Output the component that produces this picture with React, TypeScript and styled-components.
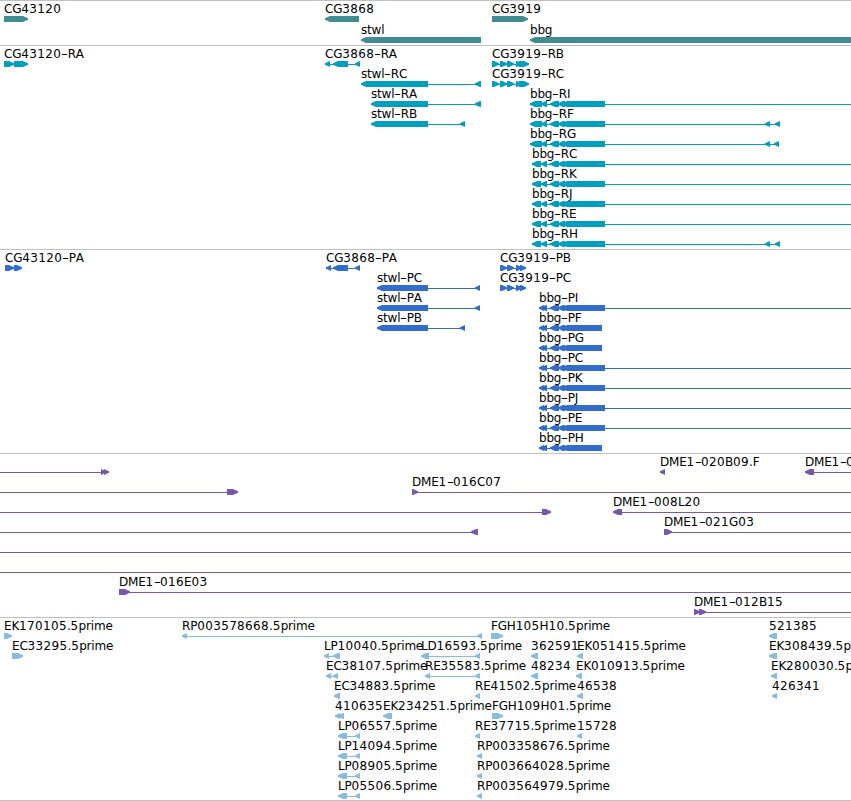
import * as React from "react"
import styled, { createGlobalStyle } from 'styled-components';

type Block = [number, number];

interface FeatureData {
    name?: string;
    reverse?: boolean;
    blocks: Block[];
    // ends of the connecting line, when it runs further than the blocks
    from?: number;
    to?: number;
}

interface TrackData {
    id: string;
    color: string;
    rowHeight: number;
    rows: FeatureData[][];
}

const VIEW_WIDTH = 851;
const BAR_HEIGHT = 6;
const HEAD = 5;

const GlobalStyle = createGlobalStyle`
    body {
        margin: 0;
        background: #ffffff;
    }
`;

const Browser = styled.main`
    width: ${VIEW_WIDTH}px;
    height: 801px;
    box-sizing: border-box;
    overflow: hidden;
    font-family: "DejaVu Sans", sans-serif;
    font-size: 12px;
    color: #000000;
`;

const TrackSection = styled.section`
    border-top: 1px solid #c0c0c0;
    padding: 1px 0 2px;
    &:first-of-type {
        padding-bottom: 1px;
    }
    &:last-of-type {
        padding-bottom: 1px;
        border-bottom: 1px solid #c0c0c0;
    }
`;

const Row = styled.div<{ $height: number }>`
    display: grid;
    grid-template-columns: ${VIEW_WIDTH}px;
    height: ${({ $height }) => $height}px;
`;

const FeatureBox = styled.div<{ $start: number }>`
    grid-area: 1 / 1;
    margin-left: ${({ $start }) => $start}px;
    min-width: 0;
`;

const Label = styled.div`
    height: 14px;
    line-height: 14px;
    white-space: pre;
    font-kerning: none;
    letter-spacing: -0.2px;
`;

const Digits = styled.span`
    letter-spacing: 0.35px;
`;

const Dash = styled.span`
    display: inline-block;
    width: 6.5px;
    letter-spacing: 0;
    transform: scaleX(1.6);
    transform-origin: 0 50%;
`;

const Bar = styled.svg`
    display: block;
    overflow: visible;
`;

const blockPoints = ([start, end]: Block, reverse?: boolean) => {
    const head = Math.min(HEAD, end - start);
    return reverse
        ? `${end},0 ${start + head},0 ${start},2.3 ${start},3.8 ${start + head},6 ${end},6`
        : `${start},0 ${end - head},0 ${end},2.3 ${end},3.8 ${end - head},6 ${start},6`;
};

const LabelText: React.FC<{ name: string }> = ({ name }) => (
    <>
        {name.split(/(\d+|-)/).map((part, i) => {
            if (part === '-') return <Dash key={i}>-</Dash>;
            return /^\d/.test(part) ? <Digits key={i}>{part}</Digits> : part;
        })}
    </>
);

const Feature: React.FC<{ data: FeatureData, color: string }> = ({ data, color }) => {
    const { name, reverse, blocks } = data;
    const start = data.from ?? blocks[0][0];
    const end = data.to ?? blocks[blocks.length - 1][1];
    return <FeatureBox $start={start}>
        <Label>{name && <LabelText name={name} />}</Label>
        <Bar width={end - start} height={BAR_HEIGHT} fill={color}>
            <rect x={0} y={3} width={end - start} height={1} />
            {blocks.map((block) => (
                <polygon key={block[0]} points={blockPoints([block[0] - start, block[1] - start], reverse)} />
            ))}
        </Bar>
    </FeatureBox>
};

const fwd = (name: string, ...blocks: Block[]): FeatureData => ({ name, blocks });
const rev = (name: string, ...blocks: Block[]): FeatureData => ({ name, blocks, reverse: true });
const toEdge = (feature: FeatureData): FeatureData => ({ ...feature, to: VIEW_WIDTH });
const fromEdge = (feature: FeatureData): FeatureData => ({ ...feature, from: 0 });

// exons shared by the bbg transcripts and proteins
const bbgExons: Block[] = [[550, 559], [558, 565], [562, 605]];
const bbgShort: Block[] = [[550, 559], [558, 565], [562, 602]];
const bbgA: Block[] = [[530, 542], [541, 547], ...bbgExons];
const bbgB: Block[] = [[532, 541], [541, 547], ...bbgExons];
const bbgP: Block[] = [[539, 544], [541, 547], ...bbgExons];
const bbgPShort: Block[] = [[539, 544], [541, 547], ...bbgShort];

const cg3919R: Block[] = [[492, 499], [500, 507], [507, 514], [516, 522], [519, 529]];
const cg3919P: Block[] = [[500, 507], [507, 514], [516, 522], [520, 526]];
const lp: Block[] = [[338, 347], [355, 360]];

const tracks: TrackData[] = [
    {
        id: 'gene', color: '#408c93', rowHeight: 21, rows: [
            [fwd('CG43120', [4, 28]), rev('CG3868', [325, 359]), fwd('CG3919', [492, 528])],
            [rev('stwl', [361, 481]), rev('bbg', [530, 860])],
        ]
    },
    {
        id: 'transcript', color: '#009fbf', rowHeight: 20, rows: [
            [fwd('CG43120-RA', [4, 11], [7, 14], [14, 28]), rev('CG3868-RA', [325, 330], [333, 348], [355, 360]), fwd('CG3919-RB', ...cg3919R)],
            [rev('stwl-RC', [361, 428], [475, 481]), fwd('CG3919-RC', ...cg3919R)],
            [rev('stwl-RA', [371, 428], [475, 481]), toEdge(rev('bbg-RI', ...bbgA))],
            [rev('stwl-RB', [371, 428], [460, 465]), rev('bbg-RF', ...bbgA, [765, 770], [775, 780])],
            [rev('bbg-RG', ...bbgA, [765, 770], [774, 779])],
            [toEdge(rev('bbg-RC', ...bbgB))],
            [toEdge(rev('bbg-RK', ...bbgB))],
            [toEdge(rev('bbg-RJ', ...bbgB))],
            [toEdge(rev('bbg-RE', ...bbgB))],
            [rev('bbg-RH', ...bbgB, [765, 770], [775, 780])],
        ]
    },
    {
        id: 'protein', color: '#306dcd', rowHeight: 20, rows: [
            [fwd('CG43120-PA', [5, 14], [14, 22]), rev('CG3868-PA', [326, 331], [333, 348], [355, 360]), fwd('CG3919-PB', ...cg3919P)],
            [rev('stwl-PC', [377, 428], [475, 480]), fwd('CG3919-PC', ...cg3919P)],
            [rev('stwl-PA', [377, 428], [475, 480]), toEdge(rev('bbg-PI', ...bbgP))],
            [rev('stwl-PB', [377, 428], [460, 465]), rev('bbg-PF', ...bbgPShort)],
            [rev('bbg-PG', ...bbgPShort)],
            [toEdge(rev('bbg-PC', ...bbgP))],
            [toEdge(rev('bbg-PK', ...bbgP))],
            [toEdge(rev('bbg-PJ', ...bbgP))],
            [toEdge(rev('bbg-PE', ...bbgP))],
            [rev('bbg-PH', ...bbgPShort)],
        ]
    },
    {
        id: 'clone', color: '#7858a8', rowHeight: 20, rows: [
            [fromEdge(fwd('', [101, 106], [104, 109])), rev('DME1-020B09.F', [660, 665]), toEdge(rev('DME1-0', [805, 814]))],
            [fromEdge(fwd('', [227, 238])), toEdge(fwd('DME1-016C07', [412, 418]))],
            [fromEdge(fwd('', [542, 551])), toEdge(rev('DME1-008L20', [613, 622]))],
            [fromEdge(rev('', [471, 478])), toEdge(fwd('DME1-021G03', [664, 672]))],
            [{ blocks: [], from: 0, to: VIEW_WIDTH }],
            [{ blocks: [], from: 0, to: VIEW_WIDTH }],
            [toEdge(fwd('DME1-016E03', [119, 130]))],
            [toEdge(fwd('DME1-012B15', [694, 700], [699, 706]))],
        ]
    },
    {
        id: 'est', color: '#87bcde', rowHeight: 20, rows: [
            [fwd('EK170105.5prime', [4, 12]), rev('RP003578668.5prime', [182, 187], [477, 482]), fwd('FGH105H10.5prime', [491, 503]), rev('521385', [769, 777])],
            [fwd('EC33295.5prime', [12, 23]), rev('LP10040.5prime', [324, 329], [333, 340]), rev('LD16593.5prime', [421, 429], [475, 480]), rev('362591', [531, 538]), rev('EK051415.5prime', [577, 583]), rev('EK308439.5prime', [769, 777])],
            [rev('EC38107.5prime', [326, 331], [333, 338]), rev('RE35583.5prime', [425, 430], [475, 480]), rev('48234', [531, 538]), rev('EK010913.5prime', [576, 582]), rev('EK280030.5prime', [771, 777])],
            [rev('EC34883.5prime', [334, 340]), rev('RE41502.5prime', [475, 480]), rev('46538', [577, 583]), rev('426341', [772, 777])],
            [rev('410635', [335, 340], [338, 344]), rev('EK234251.5prime', [383, 392]), fwd('FGH109H01.5prime', [492, 503])],
            [rev('LP06557.5prime', ...lp), rev('RE37715.5prime', [475, 480]), rev('15728', [577, 582])],
            [rev('LP14094.5prime', ...lp), rev('RP003358676.5prime', [477, 482])],
            [rev('LP08905.5prime', ...lp), rev('RP003664028.5prime', [477, 482])],
            [rev('LP05506.5prime', ...lp), rev('RP003564979.5prime', [477, 482])],
        ]
    },
];

const App: React.FC = () => {
    return <Browser>
        <GlobalStyle />
        {tracks.map(({ id, color, rowHeight, rows }) => (
            <TrackSection key={id}>
                {rows.map((features, i) => (
                    <Row key={i} $height={rowHeight}>
                        {features.map((feature, j) => <Feature key={j} data={feature} color={color} />)}
                    </Row>
                ))}
            </TrackSection>
        ))}
    </Browser>
}

export default App;
